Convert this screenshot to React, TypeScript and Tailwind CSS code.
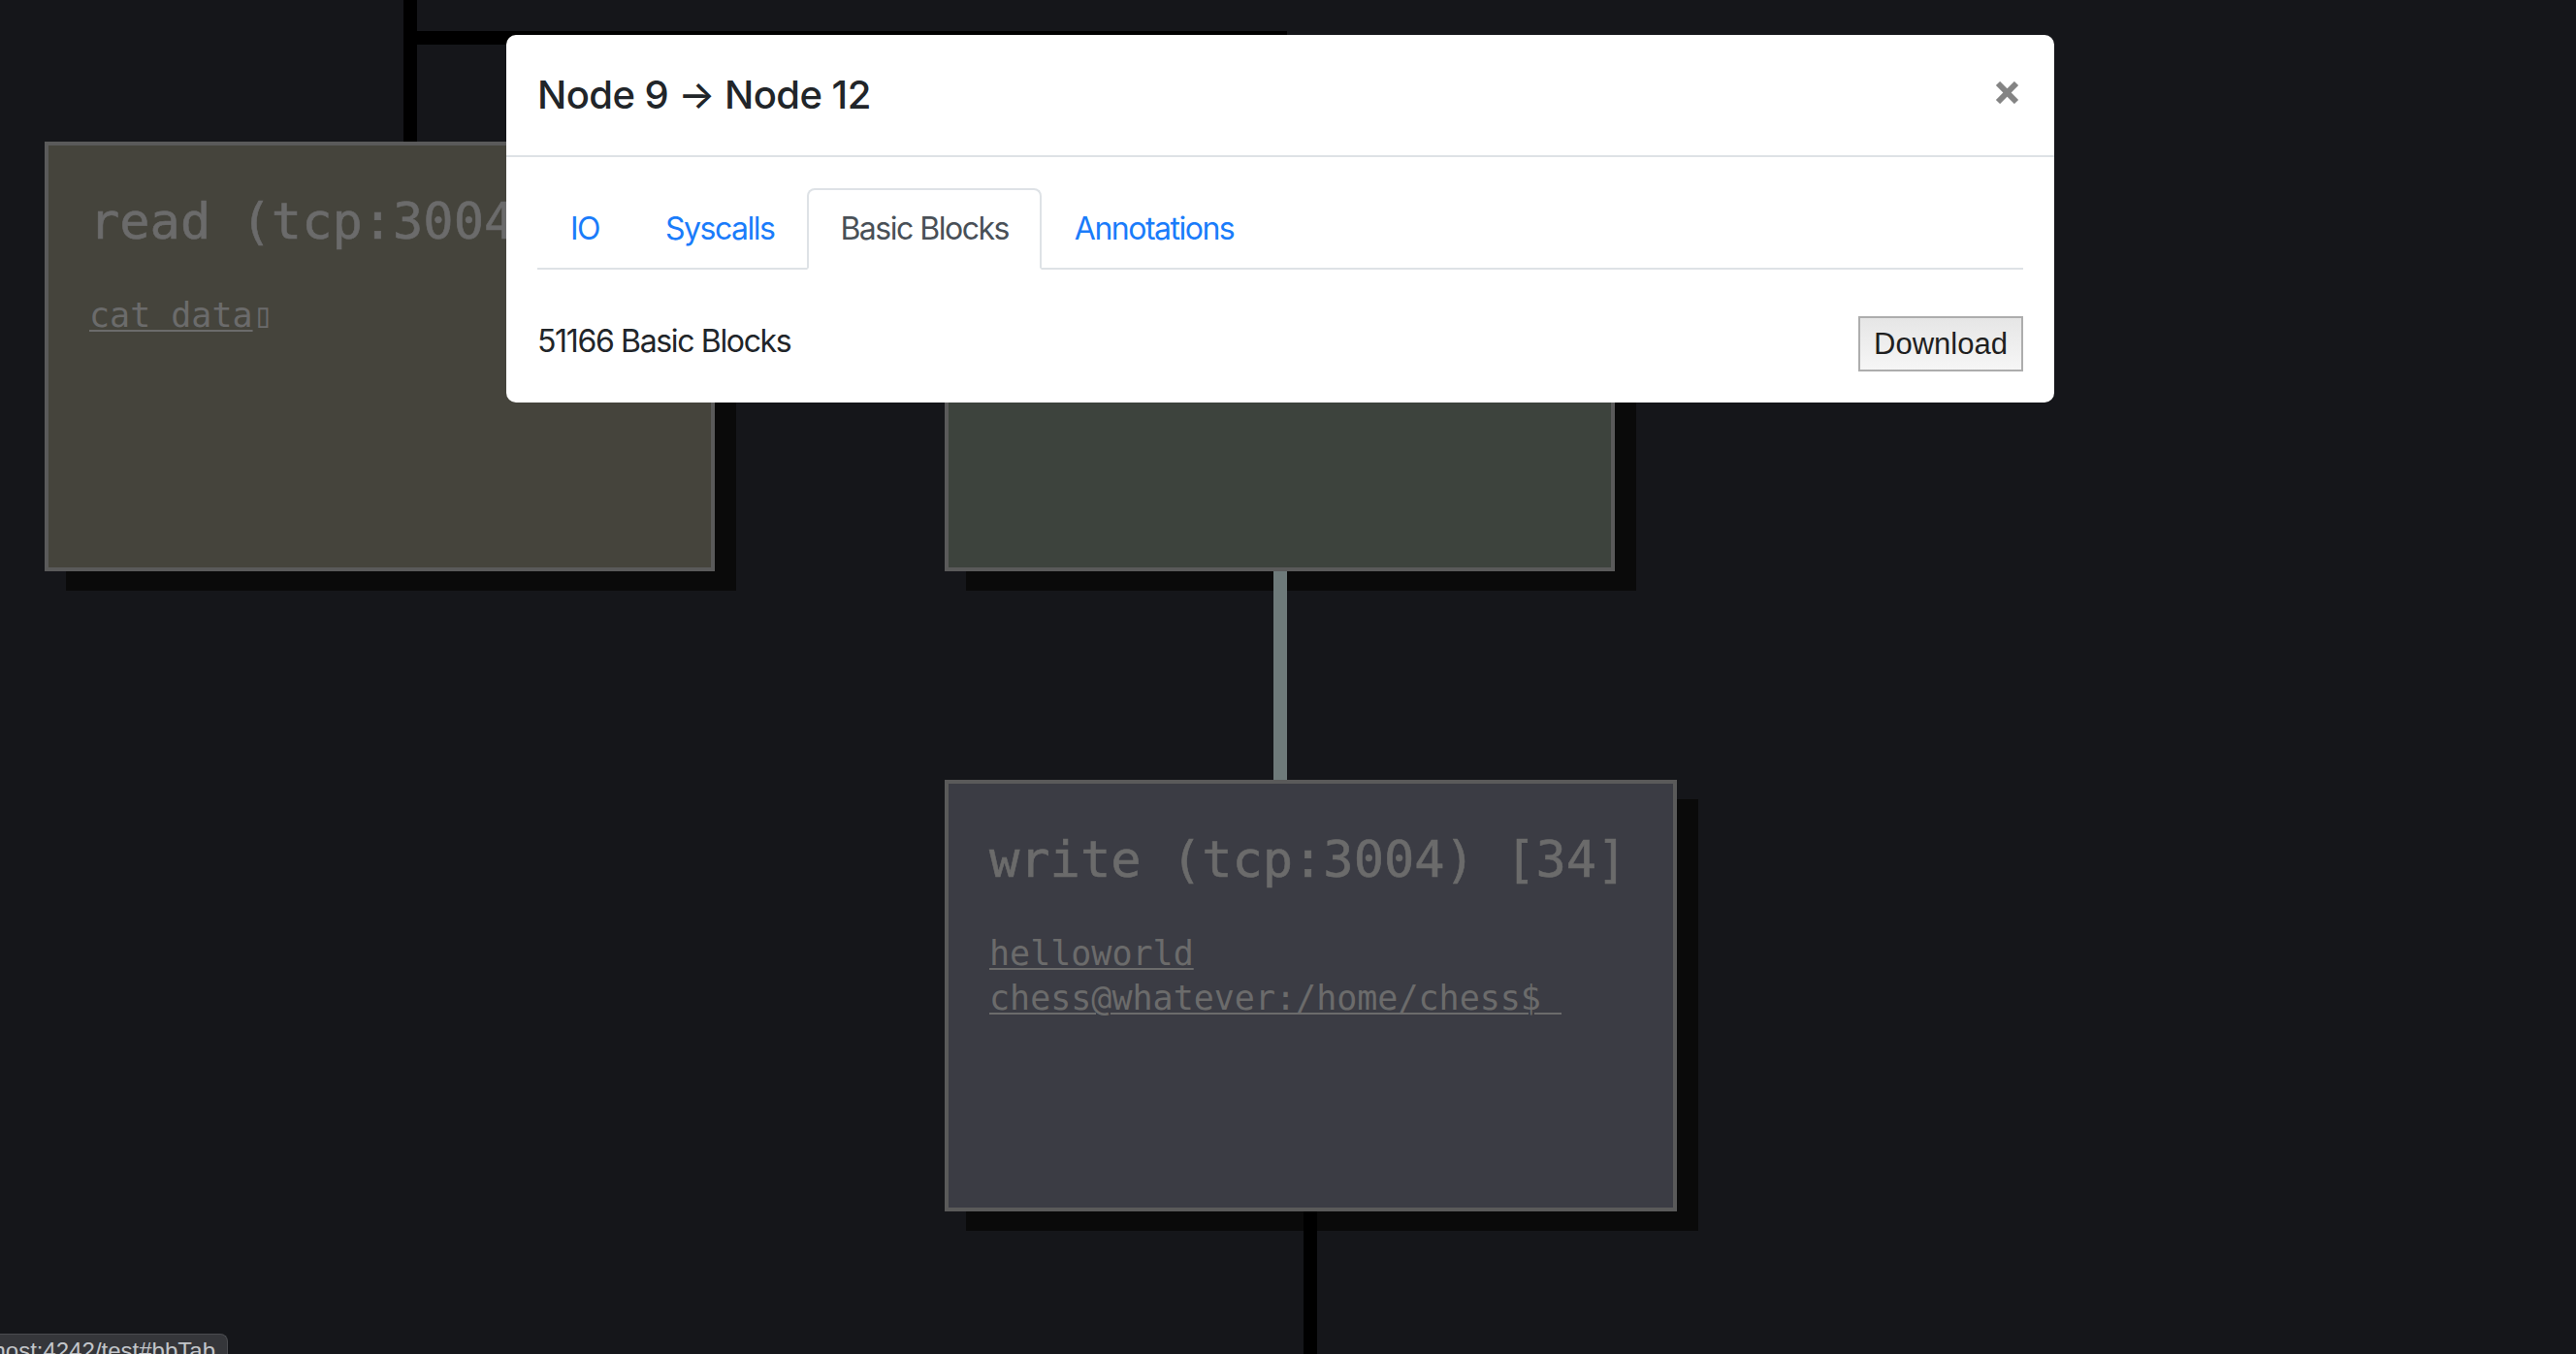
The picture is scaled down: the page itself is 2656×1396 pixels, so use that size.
import React from "react";

const mono = "font-['DejaVu_Sans_Mono',monospace]";

function Node({
  pos,
  bg,
  title,
  lines,
  box,
}: {
  pos: string;
  bg: string;
  title: string;
  lines: string[];
  box?: boolean;
}) {
  return (
    <div
      className={`absolute ${pos} ${bg} box-border border-4 border-[#5a5a5a] pl-[42px] pt-[47px] shadow-[22px_20px_0_0_#0a0a0a] ${mono} text-[#6b6b6b] overflow-hidden`}
    >
      <div className="text-[52px] leading-[62px] whitespace-nowrap [-webkit-text-stroke:0.6px_#6b6b6b]">{title}</div>
      <div className="mt-[43px] text-[35px] leading-[46px]">
        {lines.map((l, i) => (
          <div key={i} className="whitespace-pre">
            <span className="underline decoration-2 underline-offset-[3px]">{l}</span>
            {box && i === lines.length - 1 ? <span>▯</span> : null}
          </div>
        ))}
      </div>
    </div>
  );
}

export default function App() {
  const sans = "font-['Inter','Liberation_Sans',sans-serif]";
  return (
    <div className="relative w-[2656px] h-[1396px] overflow-hidden bg-[#15161a]">
      {/* edges */}
      <div className="absolute left-[416px] top-0 w-[14px] h-[146px] bg-black" />
      <div className="absolute left-[416px] top-[32px] w-[911px] h-[14px] bg-black" />
      <div className="absolute left-[1313px] top-[32px] w-[14px] h-[114px] bg-black" />

      {/* nodes */}
      <Node
        pos="left-[46px] top-[146px] w-[691px] h-[443px]"
        bg="bg-[#45443c]"
        title="read (tcp:3004) [33]"
        lines={["cat data"]}
        box
      />
      <Node
        pos="left-[974px] top-[146px] w-[691px] h-[443px]"
        bg="bg-[#3d433d]"
        title="write (tcp:3004) [31]"
        lines={["chess@whatever:/home/chess$ "]}
      />
      <Node
        pos="left-[974px] top-[804px] w-[755px] h-[445px]"
        bg="bg-[#3b3c44]"
        title="write (tcp:3004) [34]"
        lines={["helloworld", "chess@whatever:/home/chess$ "]}
      />

      {/* connectors over shadows */}
      <div className="absolute left-[1313px] top-[589px] w-[14px] h-[215px] bg-[#6e7a7a]" />
      <div className="absolute left-[1344px] top-[1249px] w-[14px] h-[147px] bg-black" />

      {/* modal */}
      <div className={`absolute left-[522px] top-[36px] w-[1596px] rounded-[10px] bg-white ${sans}`}>
        <div className="flex items-start justify-between px-[32px] py-[32px] border-b-2 border-[#dee2e6]">
          <h5 className="text-[40px] leading-[60px] font-medium tracking-[-0.55px] text-[#212529]">Node 9 → Node 12</h5>
          <button className="mt-[16px] mr-[4px] w-[25px] h-[23px] flex items-center justify-center" aria-label="Close">
            <svg width="25" height="23" viewBox="0 0 25 23">
              <path d="M3 2 L22 21 M22 2 L3 21" stroke="#848484" strokeWidth="6" />
            </svg>
          </button>
        </div>
        <div className="p-[32px]">
          <div className="flex border-b-2 border-[#dee2e6] text-[32px] leading-[48px] tracking-[-1.5px]">
            <div className="-mb-[2px] px-[32px] py-[16px] border-2 border-transparent text-[#1a7cfa]">IO</div>
            <div className="-mb-[2px] px-[32px] py-[16px] border-2 border-transparent text-[#1a7cfa]">Syscalls</div>
            <div className="-mb-[2px] px-[32px] py-[16px] border-2 border-[#dee2e6] border-b-white bg-white rounded-t-[8px] text-[#495057]">
              Basic Blocks
            </div>
            <div className="-mb-[2px] px-[32px] py-[16px] border-2 border-transparent text-[#1a7cfa]">Annotations</div>
          </div>
          <div className="mt-[48px] flex items-start justify-between">
            <div className="mt-[2px] text-[32px] leading-[48px] tracking-[-1.35px] text-[#212529]">51166 Basic Blocks</div>
            <button className="w-[170px] h-[57px] border-2 border-[#adadad] bg-gradient-to-b from-[#e6e6e6] to-[#f6f6f6] text-[31px] text-[#1f1f1f] font-['Liberation_Sans',sans-serif] leading-none">
              Download
            </button>
          </div>
        </div>
      </div>

      {/* status bubble */}
      <div className="absolute left-0 top-[1375px] w-[235px] h-[40px] overflow-hidden flex justify-end bg-[#35363a] border-t border-r border-[#4a4b4f] rounded-tr-[8px] pr-[12px] pt-[1px]">
        <span className="whitespace-nowrap text-[24px] leading-[32px] text-[#c3c6ca] font-['Liberation_Sans',sans-serif]">
          localhost:4242/test#bbTab
        </span>
      </div>
    </div>
  );
}
